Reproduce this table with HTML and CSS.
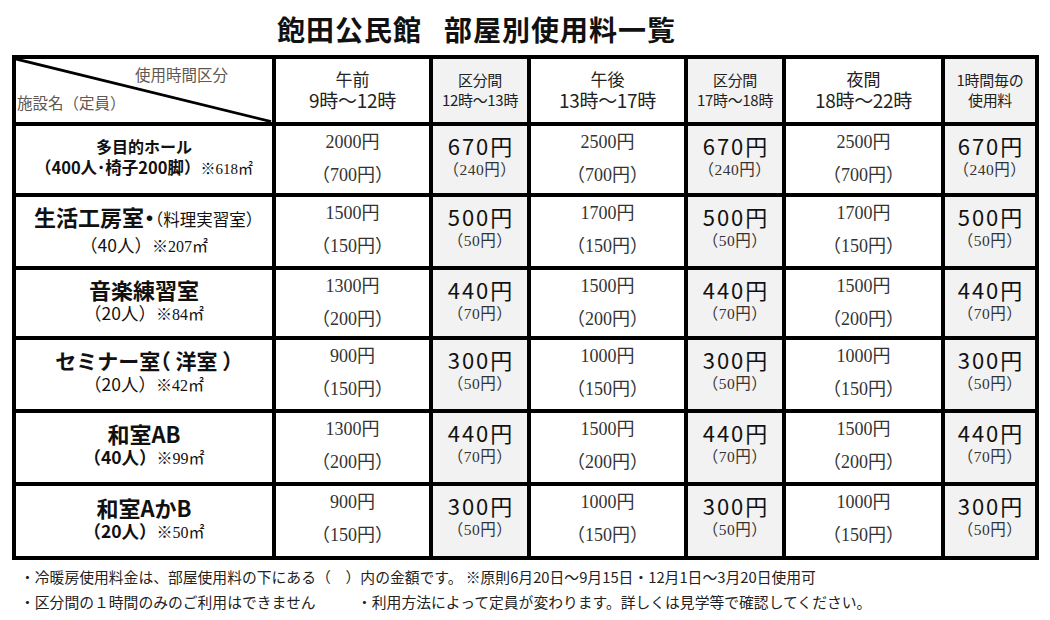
FILE: index.html
```html
<!DOCTYPE html>
<html lang="ja">
<head>
<meta charset="utf-8">
<title>飽田公民館 部屋別使用料一覧</title>
<link rel="stylesheet" href="styles.css">
</head>
<body>
<h1 class="title"><span>飽田公民館</span><span class="title-b">部屋別使用料一覧</span></h1>
<div class="sheet">
  <div class="c corner">
    <svg class="diag" viewBox="0 0 260 67" preserveAspectRatio="none"><line x1="0" y1="0" x2="259" y2="66.5" stroke="#000" stroke-width="3"/></svg>
    <span class="corner-top">使用時間区分</span>
    <span class="corner-bottom">施設名（定員）</span>
  </div>
  <div class="c hd"><span class="hd-a">午前</span><span class="hd-b">9時～12時</span></div>
  <div class="c hd g"><span class="hd-s">区分間</span><span class="hd-s">12時～13時</span></div>
  <div class="c hd"><span class="hd-a">午後</span><span class="hd-b">13時～17時</span></div>
  <div class="c hd g"><span class="hd-s">区分間</span><span class="hd-s">17時～18時</span></div>
  <div class="c hd"><span class="hd-a">夜間</span><span class="hd-b">18時～22時</span></div>
  <div class="c hd g"><span class="hd-s">1時間毎の</span><span class="hd-s">使用料</span></div>

  <div class="c nm">
    <span class="nm-s b">多目的ホール</span>
    <span class="nm-s"><b>（400人･椅子200脚）</b><span class="area">※618㎡</span></span>
  </div>
  <div class="c p"><span>2000円</span><span>（700円）</span></div>
  <div class="c q g"><span class="big">670円</span><span class="sm">（240円）</span></div>
  <div class="c p"><span>2500円</span><span>（700円）</span></div>
  <div class="c q g"><span class="big">670円</span><span class="sm">（240円）</span></div>
  <div class="c p"><span>2500円</span><span>（700円）</span></div>
  <div class="c q g"><span class="big">670円</span><span class="sm">（240円）</span></div>

  <div class="c nm nm2">
    <span class="nm-l"><b>生活工房室・</b><span class="sub">（料理実習室）</span></span>
    <span class="nm-c">（40人）<span class="area">※207㎡</span></span>
  </div>
  <div class="c p"><span>1500円</span><span>（150円）</span></div>
  <div class="c q g"><span class="big">500円</span><span class="sm">（50円）</span></div>
  <div class="c p"><span>1700円</span><span>（150円）</span></div>
  <div class="c q g"><span class="big">500円</span><span class="sm">（50円）</span></div>
  <div class="c p"><span>1700円</span><span>（150円）</span></div>
  <div class="c q g"><span class="big">500円</span><span class="sm">（50円）</span></div>

  <div class="c nm">
    <span class="nm-l b">音楽練習室</span>
    <span class="nm-c">（20人）<span class="area">※84㎡</span></span>
  </div>
  <div class="c p"><span>1300円</span><span>（200円）</span></div>
  <div class="c q g"><span class="big">440円</span><span class="sm">（70円）</span></div>
  <div class="c p"><span>1500円</span><span>（200円）</span></div>
  <div class="c q g"><span class="big">440円</span><span class="sm">（70円）</span></div>
  <div class="c p"><span>1500円</span><span>（200円）</span></div>
  <div class="c q g"><span class="big">440円</span><span class="sm">（70円）</span></div>

  <div class="c nm">
    <span class="nm-l nm-h b">セミナー室（ 洋室 ）</span>
    <span class="nm-c">（20人）<span class="area">※42㎡</span></span>
  </div>
  <div class="c p"><span>900円</span><span>（150円）</span></div>
  <div class="c q g"><span class="big">300円</span><span class="sm">（50円）</span></div>
  <div class="c p"><span>1000円</span><span>（150円）</span></div>
  <div class="c q g"><span class="big">300円</span><span class="sm">（50円）</span></div>
  <div class="c p"><span>1000円</span><span>（150円）</span></div>
  <div class="c q g"><span class="big">300円</span><span class="sm">（50円）</span></div>

  <div class="c nm">
    <span class="nm-l b">和室AB</span>
    <span class="nm-c"><b>（40人）</b><span class="area">※99㎡</span></span>
  </div>
  <div class="c p"><span>1300円</span><span>（200円）</span></div>
  <div class="c q g"><span class="big">440円</span><span class="sm">（70円）</span></div>
  <div class="c p"><span>1500円</span><span>（200円）</span></div>
  <div class="c q g"><span class="big">440円</span><span class="sm">（70円）</span></div>
  <div class="c p"><span>1500円</span><span>（200円）</span></div>
  <div class="c q g"><span class="big">440円</span><span class="sm">（70円）</span></div>

  <div class="c nm">
    <span class="nm-l b">和室AかB</span>
    <span class="nm-c"><b>（20人）</b><span class="area">※50㎡</span></span>
  </div>
  <div class="c p"><span>900円</span><span>（150円）</span></div>
  <div class="c q g"><span class="big">300円</span><span class="sm">（50円）</span></div>
  <div class="c p"><span>1000円</span><span>（150円）</span></div>
  <div class="c q g"><span class="big">300円</span><span class="sm">（50円）</span></div>
  <div class="c p"><span>1000円</span><span>（150円）</span></div>
  <div class="c q g"><span class="big">300円</span><span class="sm">（50円）</span></div>
</div>
<div class="notes">
  <p class="note">・冷暖房使用料金は、部屋使用料の下にある（　）内の金額です。 ※原則6月20日～9月15日・12月1日～3月20日使用可</p>
  <p class="note note-row"><span class="note-a">・区分間の１時間のみのご利用はできません</span><span>・利用方法によって定員が変わります。詳しくは見学等で確認してください。</span></p>
</div>
</body>
</html>
```
FILE: styles.css
```css
html, body {
  margin: 0;
  padding: 0;
  background: #fff;
}
body {
  width: 1050px;
  height: 620px;
  overflow: hidden;
  font-family: "Noto Sans CJK JP", "Noto Sans", sans-serif;
  color: #222;
}
.title {
  margin: 0;
  height: 55px;
  box-sizing: border-box;
  padding: 13px 0 0 277px;
  font-size: 28px;
  line-height: 32px;
  font-weight: 700;
  color: #111;
  letter-spacing: 1px;
}
.title-b {
  margin-left: 22px;
}
.sheet {
  display: grid;
  grid-template-columns: 260px 157px 98px 157px 98px 159px 94px;
  grid-template-rows: 67px 71px 73px 70px 73px 73px 74px;
  width: max-content;
  margin-left: 12px;
  border-left: 4px solid #000;
  border-top: 4px solid #000;
}
.c {
  box-sizing: border-box;
  border-right: 4px solid #000;
  border-bottom: 4px solid #000;
  min-width: 0;
}
.g {
  background: #f2f2f2;
}
.corner {
  position: relative;
  display: flex;
  flex-direction: column;
  justify-content: space-between;
  padding: 5px 0 9px 1px;
  font-size: 15.5px;
  line-height: 21px;
  color: #5f5750;
}
.diag {
  position: absolute;
  left: 0;
  top: 0;
  width: 256px;
  height: 63px;
}
.corner-top {
  align-self: flex-end;
  margin-right: 44px;
}
.corner-bottom {
  align-self: flex-start;
}
.hd {
  display: flex;
  flex-direction: column;
  align-items: center;
  justify-content: center;
  padding-bottom: 2px;
  color: #222;
}
.hd-a {
  font-size: 17px;
  line-height: 20px;
}
.hd-b {
  font-size: 19px;
  line-height: 21px;
  letter-spacing: -0.3px;
}
.hd-s {
  font-size: 15px;
  line-height: 20px;
  letter-spacing: -0.3px;
}
.nm {
  display: flex;
  flex-direction: column;
  align-items: center;
  justify-content: center;
  padding-bottom: 3px;
  color: #111;
}
.b, .nm b {
  font-weight: 700;
}
.nm-s {
  font-size: 16.5px;
  line-height: 21px;
}
.nm-s.b {
  font-size: 16px;
}
.nm-l {
  font-size: 22px;
  line-height: 24px;
  font-feature-settings: "halt";
}
.nm-h {
  font-size: 21px;
}
.nm2 .nm-l {
  line-height: 28px;
}
.nm-c {
  font-size: 17.5px;
  line-height: 24px;
}
.sub {
  font-size: 16.5px;
  font-weight: 400;
}
.area {
  font-family: "Liberation Serif", "Noto Sans CJK JP", serif;
  font-weight: 400;
  font-size: 16px;
}
.nm-s .area {
  font-size: 15px;
}
.p {
  display: flex;
  flex-direction: column;
  align-items: center;
  font-family: "Liberation Serif", "Noto Sans CJK JP", serif;
  font-size: 18px;
  line-height: 33px;
  color: #333;
  font-feature-settings: "halt";
}
.q {
  display: flex;
  flex-direction: column;
  align-items: center;
  padding-top: 6px;
  color: #111;
}
.big {
  font-size: 22px;
  line-height: 26px;
  letter-spacing: 2px;
  margin-right: -2px;
}
.sm {
  font-family: "Liberation Serif", "Noto Sans CJK JP", serif;
  font-size: 15.5px;
  line-height: 24px;
  letter-spacing: 0.5px;
  color: #333;
}
.notes {
  padding: 4px 0 0 20px;
  font-size: 14.8px;
  line-height: 25px;
  color: #222;
}
.note {
  margin: 0;
  white-space: nowrap;
}
.note-row {
  display: flex;
}
.note-a {
  width: 337px;
}
```
